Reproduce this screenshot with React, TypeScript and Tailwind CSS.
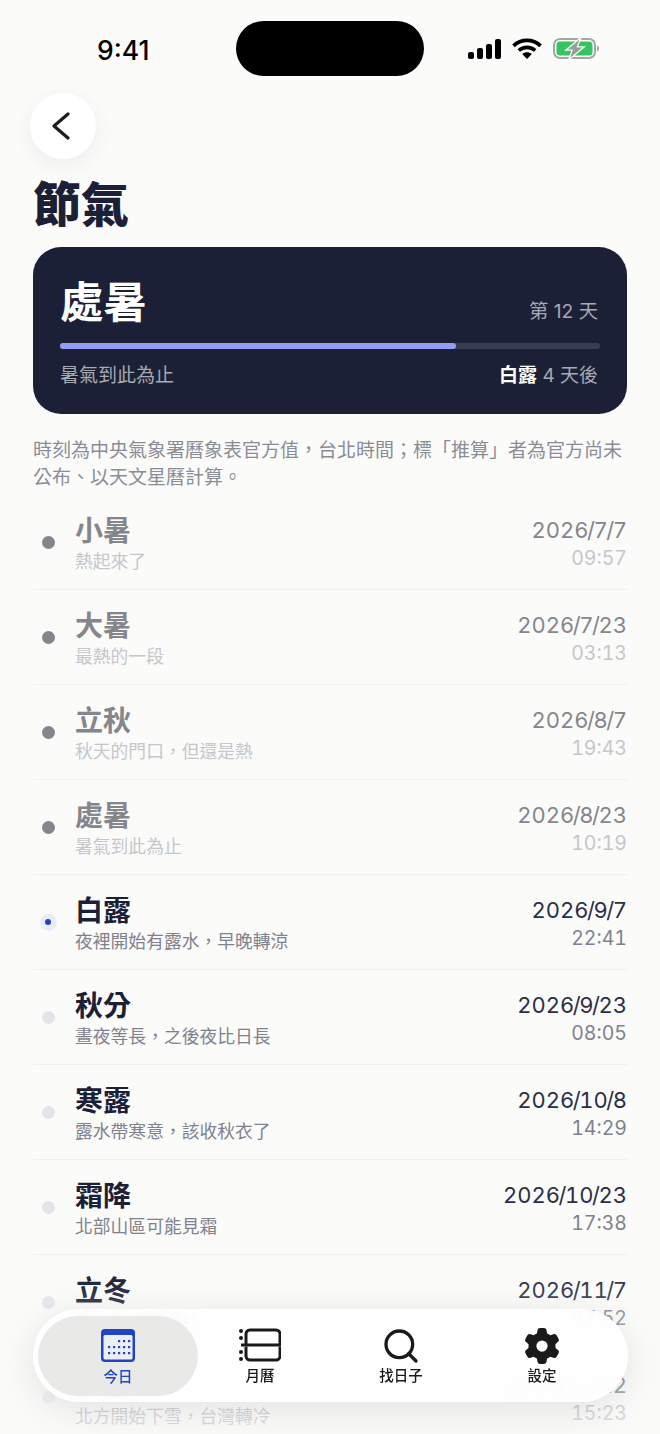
import { Search } from "lucide-react";
import { FaGear } from "react-icons/fa6";

type Term = {
  name: string;
  note: string;
  date: string;
  time: string;
  state: "past" | "next" | "future";
};

const terms: Term[] = [
  { name: "小暑", note: "熱起來了", date: "2026/7/7", time: "09:57", state: "past" },
  { name: "大暑", note: "最熱的一段", date: "2026/7/23", time: "03:13", state: "past" },
  { name: "立秋", note: "秋天的門口，但還是熱", date: "2026/8/7", time: "19:43", state: "past" },
  { name: "處暑", note: "暑氣到此為止", date: "2026/8/23", time: "10:19", state: "past" },
  { name: "白露", note: "夜裡開始有露水，早晚轉涼", date: "2026/9/7", time: "22:41", state: "next" },
  { name: "秋分", note: "晝夜等長，之後夜比日長", date: "2026/9/23", time: "08:05", state: "future" },
  { name: "寒露", note: "露水帶寒意，該收秋衣了", date: "2026/10/8", time: "14:29", state: "future" },
  { name: "霜降", note: "北部山區可能見霜", date: "2026/10/23", time: "17:38", state: "future" },
  { name: "立冬", note: "冬天從這裡開始", date: "2026/11/7", time: "07:52", state: "future" },
  { name: "小雪", note: "北方開始下雪，台灣轉冷", date: "2026/11/22", time: "15:23", state: "future" },
];

function StatusBar() {
  return (
    <div className="flex h-[93px] items-start pt-[21px] pl-[97px]">
      <div className="mt-[11px] w-[139px] text-[26.500px] leading-[36px] font-medium text-black">9:41</div>
      <div className="h-[55px] w-[188px] rounded-full bg-black" />
      <div className="ml-[44px] mt-[17px] flex items-center">
        <svg width="33" height="20" viewBox="0 0 33 20" className="block">
          <rect x="0" y="13" width="6" height="7" rx="2" fill="#000" />
          <rect x="9" y="9" width="6" height="11" rx="2" fill="#000" />
          <rect x="18" y="5" width="6" height="15" rx="2" fill="#000" />
          <rect x="27" y="0" width="6" height="20" rx="2" fill="#000" />
        </svg>
        <svg width="30" height="21" viewBox="0 0 30 21" className="ml-[11px] block">
          <path d="M1.500 7.800C9 .6 21 .6 28.500 7.800" fill="none" stroke="#000" strokeWidth="3.800" />
          <path d="M6.800 12.500C11.500 8.300 18.500 8.300 23.200 12.500" fill="none" stroke="#000" strokeWidth="3.600" />
          <path d="M10.200 16C13 13.800 17 13.800 19.800 16L15 21Z" fill="#000" />
        </svg>
        <svg width="46" height="21" viewBox="0 0 46 21" className="ml-[11px] block">
          <rect x="1" y="1" width="41" height="19" rx="6" fill="none" stroke="#a6a8a6" strokeWidth="2" />
          <path d="M44 7.500v6c1.500-.5 2-1.700 2-3s-.5-2.500-2-3Z" fill="#a6a8a6" />
          <rect x="3.500" y="3.500" width="36" height="14" rx="3.500" fill="#35c55f" />
          <path d="M26.500 1.500 14.500 11.500H20L17 20 29.500 9.500H23.500Z" fill="#9b9d9b" stroke="#fbfbfa" strokeWidth="2.500" paintOrder="stroke" />
        </svg>
      </div>
    </div>
  );
}

// the reference uses tabular digits with a narrow slash
function DateText({ value }: { value: string }) {
  return (
    <>
      {value.split("/").map((part, i) => (
        <span key={i}>
          {i > 0 && <span className="-mx-[1.500px]">/</span>}
          {part}
        </span>
      ))}
    </>
  );
}

function TermRow({ term, last }: { term: Term; last: boolean }) {
  const past = term.state === "past";
  return (
    <div className={`flex h-[95px] items-center ${last ? "" : "border-b border-[#f0f0ee]"}`}>
      <div className="flex w-[42px] justify-center pr-[12px]">
        {term.state === "next" ? (
          <div className="flex h-[17px] w-[17px] items-center justify-center rounded-full bg-[#e9edfb]">
            <div className="h-[6px] w-[6px] rounded-full bg-[#2144c4]" />
          </div>
        ) : (
          <div className={`h-[13px] w-[13px] rounded-full ${past ? "bg-[#85858c]" : "bg-[#e3e4e8]"}`} />
        )}
      </div>
      <div className="flex-1 pt-[3px]">
        <div className={`text-[28px] leading-[34px] font-bold ${past ? "text-[#85868c]" : "text-[#1c2036]"}`}>
          {term.name}
        </div>
        <div className={`mt-[2px] text-[17.800px] leading-[24px] ${past ? "text-[#c6c7ca]" : "text-[#7f828c]"}`}>
          {term.note}
        </div>
      </div>
      <div className="pt-[2px] text-right tabular-nums">
        <div className={`text-[22px] leading-[30px] ${past ? "text-[#85868c]" : "text-[#2b2f45]"}`}>
          <DateText value={term.date} />
        </div>
        <div className={`text-[19.500px] leading-[27px] ${past ? "text-[#c6c7ca]" : "text-[#7f828c]"}`}>{term.time}</div>
      </div>
    </div>
  );
}

function TabBar() {
  return (
    <div className="absolute bottom-[32px] left-[33px] flex h-[93px] w-[595px] items-center rounded-full bg-white/90 p-[5px] shadow-[0_8px_40px_rgba(0,0,0,0.1)] backdrop-blur-md">
      <div className="flex h-[80px] w-[160px] flex-col items-center justify-center rounded-full bg-[#e5e6e3]/85 pt-[4px]">
        <svg width="36" height="33" viewBox="0 0 36 33" className="block">
          <rect x="1" y="0" width="34" height="33" rx="4" fill="#2144c4" />
          <rect x="3.500" y="6" width="29" height="24.500" rx="1.500" fill="#eceef4" />
          {[12, 18, 24].map((y) =>
            [9, 14, 19, 24, 29].map((x) =>
              y === 12 && x < 19 ? null : <rect key={`${x}-${y}`} x={x - 1} y={y - 1} width="2.200" height="2.200" fill="#2144c4" />
            )
          )}
        </svg>
        <span className="mt-[5px] text-[14.500px] leading-[20px] font-medium text-[#2144c4]">今日</span>
      </div>
      <div className="flex gap-[17px]">
        <div className="flex w-[124px] flex-col items-center">
          <svg width="42" height="34" viewBox="0 0 42 34" fill="none" className="mt-[2px] block">
            <path d="M7 16V6a4 4 0 0 1 4-4h26a4 4 0 0 1 4 4v10M7 18.500V28a4 4 0 0 0 4 4h26a4 4 0 0 0 4-4V18.500" stroke="#1a1a1a" strokeWidth="3" />
            <path d="M2 17H42" stroke="#1a1a1a" strokeWidth="3" />
            {[3, 10, 24, 31].map((y) => (
              <circle key={y} cx="2" cy={y} r="2" fill="#1a1a1a" />
            ))}
          </svg>
          <span className="mt-[4px] text-[14.500px] leading-[20px] font-medium text-[#1a1a1a]">月曆</span>
        </div>
        <div className="flex w-[124px] flex-col items-center">
          <Search size={40} strokeWidth={2} color="#1a1a1a" className="-mb-[6px] block" />
          <span className="mt-[6px] text-[14.500px] leading-[20px] font-medium text-[#1a1a1a]">找日子</span>
        </div>
        <div className="flex w-[124px] flex-col items-center">
          <FaGear size={36} color="#1a1a1a" className="mt-[2px] -mb-[4px] block" />
          <span className="mt-[6px] text-[14.500px] leading-[20px] font-medium text-[#1a1a1a]">設定</span>
        </div>
      </div>
    </div>
  );
}

export default function App() {
  return (
    <div
      className="relative h-[1434px] w-[660px] overflow-hidden bg-[#fbfbfa]"
      style={{ fontFamily: 'Inter, "Noto Sans CJK TC", sans-serif' }}
    >
      <StatusBar />
      <div className="pl-[30px]">
        <button className="flex h-[66px] w-[66px] items-center justify-center rounded-full bg-white shadow-[0_6px_24px_rgba(0,0,0,0.06)]">
          <svg width="18" height="30" viewBox="0 0 18 30" fill="none" className="mr-[4px]">
            <path d="M16 3 2 15l14 12" stroke="#1c1c20" strokeWidth="3.200" strokeLinecap="round" strokeLinejoin="round" />
          </svg>
        </button>
      </div>
      <div className="px-[33px]">
        <h1 className="mt-[18px] text-[48px] leading-[56px] font-black text-[#1c2036]">節氣</h1>
        <div className="mt-[14px] h-[167px] rounded-[28px] bg-[#1c2036] px-[27px] pt-[27px]">
          <div className="flex items-end justify-between">
            <div className="text-[43.500px] leading-[56px] font-bold text-white">處暑</div>
            <div className="pr-[2px] pb-[5px] text-[19.300px] leading-[28px] text-[#a7a9b3]">第 12 天</div>
          </div>
          <div className="mt-[13px] h-[6px] rounded-full bg-[#383c50]">
            <div className="h-full w-[73.300%] rounded-full bg-[#8f9ff5]" />
          </div>
          <div className="mt-[13px] flex justify-between pr-[2px] text-[19px] leading-[28px] text-[#a7a9b3]">
            <span>暑氣到此為止</span>
            <span>
              <span className="font-bold text-white">白露</span> 4 天後
            </span>
          </div>
        </div>
        <p className="mt-[24px] text-[19px] leading-[26.500px] text-[#8a8d96]">
          時刻為中央氣象署曆象表官方值，台北時間；標「推算」者為官方尚未公布、以天文星曆計算。
        </p>
        <div className="mt-[4px]">
          {terms.map((term, i) => (
            <TermRow key={term.name} term={term} last={i === terms.length - 1} />
          ))}
        </div>
      </div>
      <div className="pointer-events-none absolute inset-x-0 bottom-0 h-[160px] bg-gradient-to-b from-[#fbfbfa]/0 to-[#fbfbfa]/80" />
      <TabBar />
    </div>
  );
}
